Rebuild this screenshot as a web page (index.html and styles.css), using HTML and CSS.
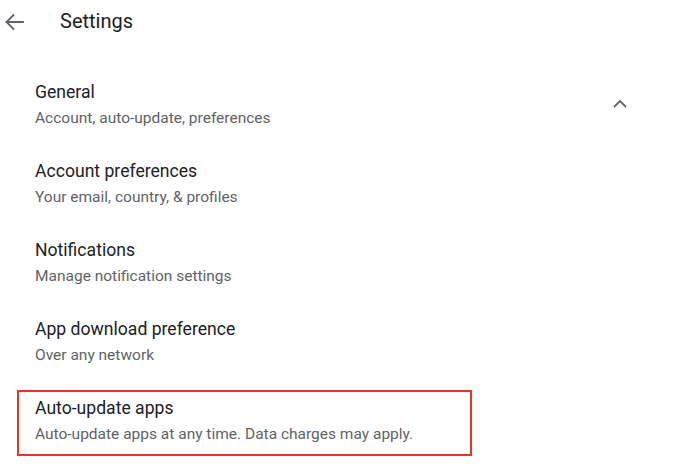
FILE: index.html
```html
<!DOCTYPE html>
<html>
<head>
<meta charset="utf-8">
<link rel="stylesheet" href="styles.css">
</head>
<body>
<div class="app">
  <header class="topbar">
    <svg class="back" width="24" height="24" viewBox="0 0 24 24"><path d="M21 12H4.5M11.5 5L4.5 12L11.5 19" fill="none" stroke="#5f6368" stroke-width="1.8" stroke-linecap="square"/></svg>
    <h1 class="title">Settings</h1>
  </header>
  <ul class="list">
    <li class="row">
      <div class="texts">
        <div class="label">General</div>
        <div class="sub">Account, auto-update, preferences</div>
      </div>
      <svg class="chev" width="16" height="10" viewBox="0 0 16 10"><path d="M2 8L8 2L14 8" fill="none" stroke="#5f6368" stroke-width="1.8"/></svg>
    </li>
    <li class="row">
      <div class="texts">
        <div class="label">Account preferences</div>
        <div class="sub">Your email, country, &amp; profiles</div>
      </div>
    </li>
    <li class="row">
      <div class="texts">
        <div class="label">Notifications</div>
        <div class="sub">Manage notification settings</div>
      </div>
    </li>
    <li class="row">
      <div class="texts">
        <div class="label">App download preference</div>
        <div class="sub">Over any network</div>
      </div>
    </li>
    <li class="row row-marked">
      <div class="texts">
        <div class="label">Auto-update apps</div>
        <div class="sub">Auto-update apps at any time. Data charges may apply.</div>
      </div>
    </li>
  </ul>
</div>
</body>
</html>
```
FILE: styles.css
```css
html, body {
  margin: 0;
  padding: 0;
  background: #ffffff;
}
body {
  font-family: Roboto, "Noto Sans", Arial, sans-serif;
  color: #202124;
  width: 680px;
  height: 464px;
  overflow: hidden;
}
.topbar {
  height: 42px;
  display: flex;
  align-items: center;
}
.back {
  margin-left: 2px;
  margin-top: 1px;
}
.title {
  margin: 0 0 0 34px;
  font-size: 20px;
  font-weight: 400;
  line-height: 24px;
  color: #202124;
}
.list {
  list-style: none;
  margin: 0;
  padding: 23px 0 0 0;
}
.row {
  display: flex;
  align-items: center;
  padding: 15px 0 14px 35px;
  width: 680px;
  box-sizing: border-box;
}
.texts {
  display: flex;
  flex-direction: column;
  gap: 2px;
}
.label {
  font-size: 17.6px;
  line-height: 24px;
  color: #202124;
}
.sub {
  font-size: 15.5px;
  line-height: 24px;
  color: #5f6368;
}
.chev {
  margin-left: auto;
  margin-right: 52px;
  align-self: flex-start;
  margin-top: 19px;
}
.row-marked {
  width: 455px;
  margin: 9px 0 0 17px;
  padding: 4px 0 8px 16px;
  border: 2px solid #f2321e;
}
```
